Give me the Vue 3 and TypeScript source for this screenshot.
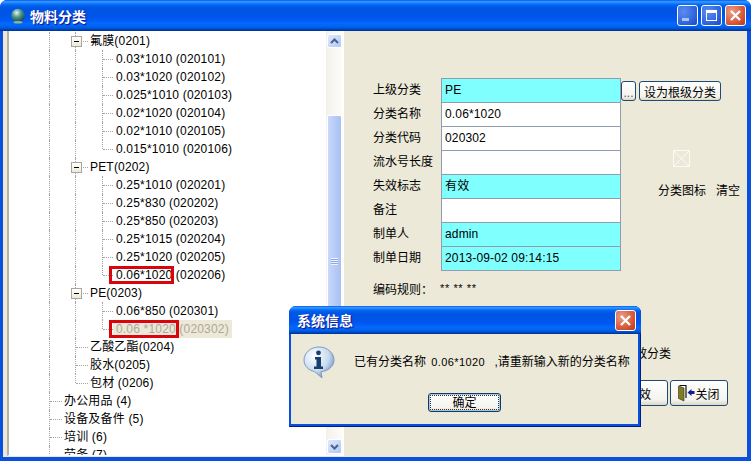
<script setup lang="ts">
interface TreeRow {
  text: string
  note?: string
  level: 1 | 2 | 3
  open?: boolean
  mark?: string
  selected?: boolean
  end?: boolean
}

const rows: TreeRow[] = [
  { text: '氟膜(0201)', level: 2, open: true },
  { text: '0.03*1010 (020101)', level: 3 },
  { text: '0.03*1020 (020102)', level: 3 },
  { text: '0.025*1010 (020103)', level: 3 },
  { text: '0.02*1020 (020104)', level: 3 },
  { text: '0.02*1010 (020105)', level: 3 },
  { text: '0.015*1010 (020106)', level: 3, end: true },
  { text: 'PET(0202)', level: 2, open: true },
  { text: '0.25*1010 (020201)', level: 3 },
  { text: '0.25*830 (020202)', level: 3 },
  { text: '0.25*850 (020203)', level: 3 },
  { text: '0.25*1015 (020204)', level: 3 },
  { text: '0.25*1020 (020205)', level: 3 },
  { text: ' (020206)', mark: '0.06*1020', level: 3, end: true },
  { text: 'PE(0203)', level: 2, open: true },
  { text: '0.06*850 (020301)', level: 3 },
  { text: ' (020302)', mark: '0.06 *1020', level: 3, selected: true, end: true },
  { text: '乙酸乙酯(0204)', level: 2 },
  { text: '胶水(0205)', level: 2 },
  { text: '包材 (0206)', level: 2, end: true },
  { text: '办公用品 (4)', level: 1 },
  { text: '设备及备件 (5)', level: 1 },
  { text: '培训 (6)', level: 1 },
  { text: '劳务 (7)', level: 1 },
]

// 索引 19 之前二级竖线一直向下
const lastLevel2 = rows.findIndex((r) => r.text.startsWith('包材'))

const fields = [
  { label: '上级分类', value: 'PE', locked: true },
  { label: '分类名称', value: '0.06*1020', locked: false },
  { label: '分类代码', value: '020302', locked: false },
  { label: '流水号长度', value: '', locked: false },
  { label: '失效标志', value: '有效', locked: true },
  { label: '备注', value: '', locked: false },
  { label: '制单人', value: 'admin', locked: true },
  { label: '制单日期', value: '2013-09-02 09:14:15', locked: true },
]
</script>

<template>
  <div class="win">
    <header class="titlebar">
      <svg class="app-icon" width="16" height="16" viewBox="0 0 16 16">
        <defs>
          <radialGradient id="globe" cx="0.4" cy="0.3" r="0.8">
            <stop offset="0" stop-color="#e6f4f0" />
            <stop offset="0.4" stop-color="#4f9c8c" />
            <stop offset="1" stop-color="#0b3444" />
          </radialGradient>
        </defs>
        <circle cx="8" cy="7.500" r="6.800" fill="url(#globe)" />
        <ellipse cx="8" cy="14.300" rx="4.500" ry="1.200" fill="#8fb2a0" />
      </svg>
      <span class="title-text">物料分类</span>
      <div class="caption-btns">
        <button class="cap cap-blue"><i class="glyph-min"></i></button>
        <button class="cap cap-blue"><i class="glyph-max"></i></button>
        <button class="cap cap-red">
          <svg width="13" height="13" viewBox="0 0 13 13"><path d="M2 2l9 9M11 2l-9 9" stroke="#fff" stroke-width="2.2" /></svg>
        </button>
      </div>
    </header>

    <div class="client">
      <section class="tree-pane">
        <div class="tree">
          <div
            v-for="(row, i) in rows"
            :key="row.text + i"
            class="row"
            :class="`lv${row.level}`"
          >
            <i class="vline v1"></i>
            <i v-if="i <= lastLevel2" class="vline v2" :class="{ half: i === lastLevel2 }"></i>
            <i v-if="row.level === 3" class="vline v3" :class="{ half: row.end }"></i>
            <i class="hline"></i>
            <i v-if="row.open" class="expander"></i>
            <span class="label" :class="{ selected: row.selected }">
              <span v-if="row.mark" class="marked" :class="{ wide: row.selected }">{{ row.mark }}</span>{{ row.text }}
            </span>
          </div>
        </div>
        <div class="scrollbar">
          <button class="sb-btn sb-up">
            <svg width="9" height="6" viewBox="0 0 9 6"><path d="M1 5l3.500-3.500L8 5" fill="none" stroke="#4d6185" stroke-width="2" /></svg>
          </button>
          <div class="sb-gap-top"></div>
          <div class="sb-thumb"><i class="grip"></i></div>
          <div class="sb-gap-bottom"></div>
          <button class="sb-btn">
            <svg width="9" height="6" viewBox="0 0 9 6"><path d="M1 1l3.500 3.500L8 1" fill="none" stroke="#4d6185" stroke-width="2" /></svg>
          </button>
        </div>
      </section>

      <section class="detail">
        <div class="form-area">
          <div class="form">
            <div v-for="f in fields" :key="f.label" class="field">
              <label class="field-label">{{ f.label }}</label>
              <div class="field-input" :class="{ locked: f.locked }">{{ f.value }}</div>
            </div>
          </div>
          <div class="side">
            <div class="side-top">
              <button class="xp-btn dots">...</button>
              <button class="xp-btn root">设为根级分类</button>
            </div>
            <div class="broken-img">
              <svg width="17" height="17" viewBox="0 0 17 17">
                <path d="M.5.5h16v16H.5zM.5.5l16 16M16.5.5l-16 16" fill="none" stroke="#fbfbf6" />
              </svg>
            </div>
            <div class="side-links">
              <span>分类图标</span>
              <span>清空</span>
            </div>
          </div>
        </div>
        <div class="rule">
          <span class="rule-label">编码规则：</span>
          <span class="rule-value">** ** **</span>
        </div>
        <div class="check-line">显示失效分类</div>
        <div class="actions">
          <button class="xp-btn act">失效</button>
          <button class="xp-btn act close">
            <svg width="17" height="18" viewBox="0 0 17 18">
              <path d="M1.500 1.500h6.500V14" fill="none" stroke="#111" stroke-width="1.200" />
              <path d="M.5 2l5.500 2v13L.5 14.500z" fill="#7f7f22" stroke="#2d2d10" stroke-width="0.6" />
              <path d="M16.500 7H13.500V5L9.500 8.500l4 3.500V10h3z" fill="#12208f" />
            </svg>
            <span>关闭</span>
          </button>
        </div>
      </section>
    </div>

    <div class="dialog">
      <header class="dlg-title">
        <span>系统信息</span>
        <button class="cap cap-red">
          <svg width="13" height="13" viewBox="0 0 13 13"><path d="M2 2l9 9M11 2l-9 9" stroke="#fff" stroke-width="2.2" /></svg>
        </button>
      </header>
      <div class="dlg-body">
        <div class="dlg-msg">
          <svg class="info" width="32" height="32" viewBox="0 0 32 32">
            <defs>
              <radialGradient id="bubble" cx="0.35" cy="0.3" r="0.8">
                <stop offset="0" stop-color="#ffffff" />
                <stop offset="0.6" stop-color="#c7daf0" />
                <stop offset="1" stop-color="#5c86b8" />
              </radialGradient>
            </defs>
            <path d="M16 1C7.500 1 1 7 1 14c0 6 4.500 10.500 10.500 11.500L19 32l-1-6.200C25 25 31 20.500 31 14 31 7 24.500 1 16 1z" fill="url(#bubble)" stroke="#7d9cc2" />
            <circle cx="15.500" cy="6.800" r="2.400" fill="#17406f" />
            <path d="M12 11h6v9.500h2V23h-9v-2.500h2.500v-7H12z" fill="#17406f" />
          </svg>
          <span class="msg-text">已有分类名称 <span class="msg-num">0.06*1020</span> ,请重新输入新的分类名称</span>
        </div>
        <div class="dlg-foot">
          <button class="xp-btn ok"><span>确定</span></button>
        </div>
      </div>
    </div>
  </div>
</template>

<style>
html,
body {
  margin: 0;
  background: #fff;
}
</style>

<style scoped>
.win {
  position: relative;
  width: 751px;
  height: 461px;
  display: flex;
  flex-direction: column;
  overflow: hidden;
  box-sizing: border-box;
  font-family: 'Liberation Sans', 'Noto Sans CJK SC', sans-serif;
  font-size: 12px;
  color: #000;
  background: #0a50e0;
  border-radius: 7px 7px 0 0;
}

button {
  font: inherit;
  padding: 0;
  margin: 0;
}

.titlebar {
  height: 31px;
  flex: none;
  display: flex;
  align-items: center;
  padding: 0 5px 0 10px;
  background: linear-gradient(#0058ee 0%, #3593ff 5%, #288eff 8%, #127dff 11%, #036ffc 14%, #0262ee 18%, #0057e5 24%, #0054e3 30%, #0055eb 56%, #005bf5 66%, #026afe 76%, #0062ef 86%, #0052d6 92%, #0040ab 96%, #003092 100%);
}

.app-icon {
  margin: 1px 4px 0 0;
}

.title-text {
  color: #fff;
  font-size: 14px;
  font-weight: 700;
  text-shadow: 1px 1px 1px #0f1089;
}

.caption-btns {
  margin-left: auto;
  display: flex;
  gap: 3px;
}

.cap {
  width: 21px;
  height: 21px;
  box-sizing: border-box;
  border: 1px solid #fff;
  border-radius: 3px;
  display: flex;
  align-items: center;
  justify-content: center;
  position: relative;
}

.cap-blue {
  background: radial-gradient(circle at 30% 30%, #5d8df0, #2a5fdc 70%, #1d46b8);
}

.cap-red {
  background: radial-gradient(circle at 30% 30%, #e8a08a, #d9593a 60%, #b03a1c);
}

.glyph-min {
  position: absolute;
  left: 4px;
  bottom: 4px;
  width: 7px;
  height: 3px;
  background: #a9c4f3;
}

.glyph-max {
  width: 11px;
  height: 11px;
  box-sizing: border-box;
  border: 1px solid #fff;
  border-top-width: 3px;
}

.client {
  flex: 1;
  min-height: 0;
  margin: 0 4px 4px 3px;
  display: flex;
  background: #ece9d8;
}

.tree-pane {
  width: 337px;
  flex: none;
  margin-left: 4px;
  display: flex;
  height: 425px;
  box-sizing: border-box;
  border-left: 2px solid #b6b3a6;
  border-right: 1px solid #fff;
  border-bottom: 1px solid #fff;
  background: #fff;
}

.tree {
  flex: 1;
  overflow: hidden;
  min-width: 0;
  padding-top: 1px;
}

.row {
  position: relative;
  height: 18px;
  line-height: 18px;
  white-space: pre;
  letter-spacing: 0.18px;
}

.vline {
  position: absolute;
  top: 0;
  bottom: 0;
  width: 0;
  border-left: 1px dotted #a4a4a4;
}

.vline.half {
  bottom: 9px;
}

.v1 {
  left: 40px;
}

.v2 {
  left: 66px;
}

.v3 {
  left: 93px;
}

.hline {
  position: absolute;
  top: 9px;
  height: 0;
  border-top: 1px dotted #a4a4a4;
}

.lv1 .hline {
  left: 41px;
  width: 12px;
}

.lv2 .hline {
  left: 67px;
  width: 12px;
}

.lv3 .hline {
  left: 94px;
  width: 10px;
}

.label {
  position: absolute;
  top: 0;
  height: 18px;
}

.lv1 .label {
  left: 55px;
}

.lv2 .label {
  left: 81px;
}

.lv3 .label {
  left: 107px;
}

.label.selected {
  left: 104px;
  padding: 0 3px;
  background: #ece9d8;
  color: #aca899;
}

.marked {
  position: relative;
}

/* 红色标注框，盖在文字上 */
.marked::after {
  content: '';
  position: absolute;
  left: -7px;
  right: -2px;
  top: -2px;
  bottom: -2px;
  border: 3px solid #d9040c;
  box-sizing: border-box;
}

.marked.wide::after {
  right: -3px;
}

.expander {
  position: absolute;
  left: 62px;
  top: 4px;
  width: 9px;
  height: 9px;
  border: 1px solid #a6a69a;
  background: linear-gradient(#fff, #ece9d8) #fff;
}

.expander::before {
  content: '';
  position: absolute;
  left: 2px;
  top: 4px;
  width: 5px;
  height: 1px;
  background: #000;
}

.scrollbar {
  width: 17px;
  flex: none;
  display: flex;
  flex-direction: column;
  background: linear-gradient(90deg, #f3f1ec, #fdfdfa);
}

.sb-btn {
  flex: none;
  height: 15px;
  width: 15px;
  margin: 1px;
  border: 1px solid #fff;
  border-radius: 2px;
  background: linear-gradient(135deg, #e1eafe, #aec8f7);
  display: flex;
  align-items: center;
  justify-content: center;
}

.sb-up {
  height: 14px;
  margin-top: 3px;
}

.sb-gap-top {
  height: 66px;
  flex: none;
}

.sb-thumb {
  height: 292px;
  flex: none;
  margin: 0 1px;
  box-sizing: border-box;
  border: 1px solid #fff;
  border-radius: 2px;
  background: linear-gradient(90deg, #c9d8fb, #b7ccf8 50%, #a9c0f2);
  display: flex;
  align-items: center;
  justify-content: center;
}

.grip {
  width: 7px;
  height: 7px;
  background: repeating-linear-gradient(#eef3fe 0 1px, #8ea8dd 1px 2px);
}

.sb-gap-bottom {
  flex: 1;
}

.detail {
  flex: 1;
  min-width: 0;
  padding: 47px 0 0 26px;
}

.form-area {
  display: flex;
}

.form {
  width: 250px;
  flex: none;
}

.field {
  display: flex;
  height: 24px;
}

.field-label {
  width: 71px;
  flex: none;
  padding-left: 3px;
  box-sizing: border-box;
  line-height: 24px;
  white-space: nowrap;
}

.field-input {
  width: 180px;
  height: 25px;
  box-sizing: border-box;
  border: 1px solid #8f9eae;
  background: #fff;
  padding-left: 3px;
  line-height: 23px;
  flex: none;
  letter-spacing: 0.15px;
}

.locked {
  background: #80ffff;
}

.side {
  flex: 1;
  min-width: 0;
}

.side-top {
  display: flex;
  gap: 3px;
  padding-top: 3px;
  margin-left: 1px;
}

.xp-btn {
  box-sizing: border-box;
  border: 1px solid #1f4a74;
  border-radius: 3px;
  background: linear-gradient(#fff, #f4f3ec 80%, #dcd8c8);
  color: #000;
  white-space: nowrap;
}

.dots {
  width: 15px;
  height: 20px;
  line-height: 22px;
  color: #555;
}

.root {
  width: 82px;
  height: 20px;
}

.broken-img {
  margin: 49px 0 0 53px;
  height: 17px;
}

.side-links {
  display: flex;
  gap: 10px;
  margin: 14px 0 0 38px;
}

.rule {
  display: flex;
  gap: 7px;
  margin-top: 9px;
  padding-left: 3px;
  align-items: center;
  height: 18px;
}

.rule-value {
  font-size: 11px;
  letter-spacing: 0.6px;
}

.check-line {
  margin: 48px 0 0 0;
  padding-left: 229px;
  line-height: 18px;
}

.actions {
  display: flex;
  justify-content: flex-end;
  gap: 2px;
  margin-top: 17px;
  padding-right: 19px;
}

.act {
  width: 58px;
  height: 26px;
  display: flex;
  align-items: center;
  justify-content: center;
}

.dialog {
  position: absolute;
  left: 289px;
  top: 306px;
  width: 352px;
  height: 121px;
  display: flex;
  flex-direction: column;
  border-radius: 7px 7px 0 0;
  background: #0a50e0;
  box-shadow: inset 0 -1px #001f7a, inset -1px 0 #001f7a;
}

.dlg-title {
  height: 28px;
  flex: none;
  display: flex;
  align-items: center;
  justify-content: space-between;
  padding: 0 5px 0 8px;
  color: #fff;
  font-size: 14px;
  font-weight: 700;
  text-shadow: 1px 1px 1px #0f1089;
  border-radius: 7px 7px 0 0;
  background: linear-gradient(#0058ee 0%, #3593ff 5%, #288eff 8%, #127dff 11%, #036ffc 14%, #0262ee 18%, #0057e5 24%, #0054e3 30%, #0055eb 56%, #005bf5 66%, #026afe 76%, #0062ef 86%, #0052d6 92%, #0040ab 96%, #003092 100%);
}

.dlg-body {
  flex: 1;
  margin: 0 3px 3px 2px;
  background: #ece9d8;
  min-height: 0;
}

.dlg-msg {
  display: flex;
  align-items: center;
  padding: 12px 0 0 12px;
  height: 32px;
}

.info {
  flex: none;
  margin-right: 19px;
}

.msg-text {
  white-space: pre;
  margin-bottom: 4px;
}

.msg-num {
  font-size: 11px;
  letter-spacing: 0.4px;
  margin: 0 6px 0 2px;
}

.dlg-foot {
  display: flex;
  justify-content: center;
  padding: 15px 0 0 0;
}

.ok {
  width: 73px;
  height: 19px;
  border-color: #0f3b67;
  padding: 1px;
  box-shadow: inset 0 0 0 1px #a9c3e8;
}

.ok span {
  display: block;
  height: 15px;
  line-height: 14px;
  border: 1px dotted #333;
  box-sizing: border-box;
}
</style>
